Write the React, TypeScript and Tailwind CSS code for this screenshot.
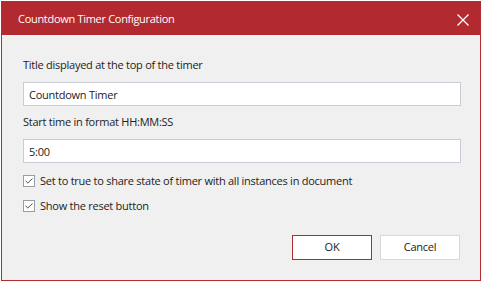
import React from "react";

const font = { fontFamily: '"Open Sans", "Noto Sans", sans-serif' };

const Check = () => (
  <span className="w-[12px] h-[12px] border border-[#959cab] bg-white flex items-center justify-center shrink-0">
    <svg width="8" height="6" viewBox="0 0 8 6" fill="none">
      <path d="M0.5 2.8 L2.8 5 L7.5 0.5" stroke="#3a3a3a" strokeWidth="0.9" />
    </svg>
  </span>
);

export default function App() {
  return (
    <div className="w-[482px] h-[282px] bg-white p-px text-[#222]" style={font}>
      <div className="w-[480px] h-[280px] border border-[#b22a2f] bg-[#f0f0f0] flex flex-col">
        {/* header */}
        <div className="h-[33px] bg-[#b22a2f] flex items-center justify-between pl-4 pr-[10px] shrink-0">
          <span className="text-white text-[11px] tracking-[-0.3px] mt-px">Countdown Timer Configuration</span>
          <svg width="12" height="12" viewBox="0 0 12 12" className="mr-px mt-[2px]">
            <path d="M0.5 0.5 L11.5 11.5 M11.5 0.5 L0.5 11.5" stroke="#fff" strokeWidth="1.3" />
          </svg>
        </div>

        {/* body */}
        <div className="flex flex-col px-[21px] pt-[22px] text-[11px] tracking-[-0.25px]">
          <label className="leading-[16px]">Title displayed at the top of the timer</label>
          <input
            className="mt-[9px] h-[24px] w-[438px] border border-[#c9ccd4] bg-white px-[5px] outline-none text-[11px] tracking-[-0.25px]"
            defaultValue="Countdown Timer"
          />
          <label className="mt-[8px] leading-[16px]">Start time in format HH:MM:SS</label>
          <input
            className="mt-[9px] h-[24px] w-[438px] border border-[#c9ccd4] bg-white px-[5px] outline-none text-[11px] tracking-[-0.25px]"
            defaultValue="5:00"
          />
          <div className="mt-[10px] flex items-center gap-[5px] leading-[16px]">
            <Check />
            <span>Set to true to share state of timer with all instances in document</span>
          </div>
          <div className="mt-[9px] flex items-center gap-[5px] leading-[16px]">
            <Check />
            <span>Show the reset button</span>
          </div>
        </div>

        <div className="flex justify-end gap-[8px] pr-[20px] mt-[21px]">
          <button className="w-[80px] h-[25px] border border-[#b22a2f] bg-white text-[11px] tracking-[-0.25px]">OK</button>
          <button className="w-[80px] h-[25px] border border-[#d8d8dc] bg-white text-[11px] tracking-[-0.25px]">Cancel</button>
        </div>
      </div>
    </div>
  );
}
